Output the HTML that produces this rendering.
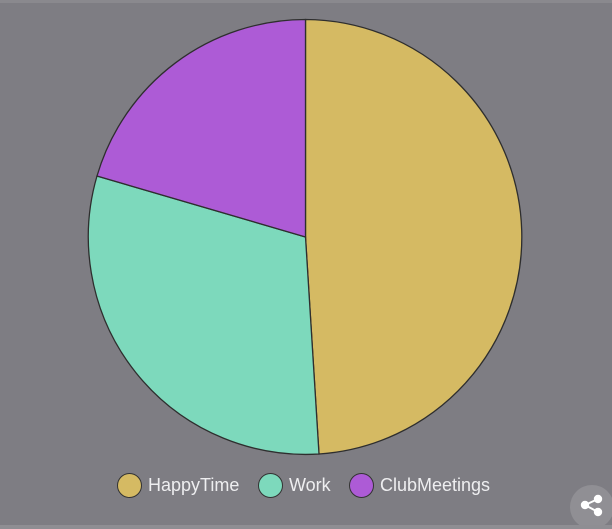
<!DOCTYPE html><html><head><style>
html,body{margin:0;padding:0;width:612px;height:529px;overflow:hidden;background:#7e7d83;font-family:"Liberation Sans",sans-serif}
.top{position:absolute;left:0;top:0;width:612px;height:3px;background:#8a898e}
.bot{position:absolute;left:0;top:525px;width:612px;height:4px;background:#8f8e93}
.leg{position:absolute;top:473px;font-size:18px;color:#eeeef0;display:flex;align-items:center}
.dot{width:25px;height:25px;border-radius:50%;border:1.5px solid #333;box-sizing:border-box;margin-right:6px}
</style></head><body>
<div class="top"></div>
<svg width="612" height="529" style="position:absolute;left:0;top:0">
<g stroke="#2e2e2e" stroke-width="1.3">
<path d="M305.5 237 L305.5 19.5 A217.5 217.5 0 0 1 319 454 Z" fill="#d5ba63"/>
<path d="M305.5 237 L319 454 A217.5 217.5 0 0 1 97 176 Z" fill="#7dd9bc"/>
<path d="M305.5 237 L97 176 A217.5 217.5 0 0 1 305.5 19.5 Z" fill="#ad5bd6"/>
</g>
<circle cx="592" cy="507" r="22" fill="#908f94"/>
<g fill="#fff" stroke="#fff" stroke-width="2">
<circle cx="598" cy="499" r="3.2"/><circle cx="585" cy="505" r="3.2"/><circle cx="598" cy="512" r="3.2"/>
<line x1="598" y1="499" x2="585" y2="505"/><line x1="585" y1="505" x2="598" y2="512"/>
</g>
</svg>
<div class="leg" style="left:117px"><div class="dot" style="background:#d5ba63"></div>HappyTime</div>
<div class="leg" style="left:258px"><div class="dot" style="background:#7dd9bc"></div>Work</div>
<div class="leg" style="left:349px"><div class="dot" style="background:#ad5bd6"></div>ClubMeetings</div>
<div class="bot"></div>
</body></html>
